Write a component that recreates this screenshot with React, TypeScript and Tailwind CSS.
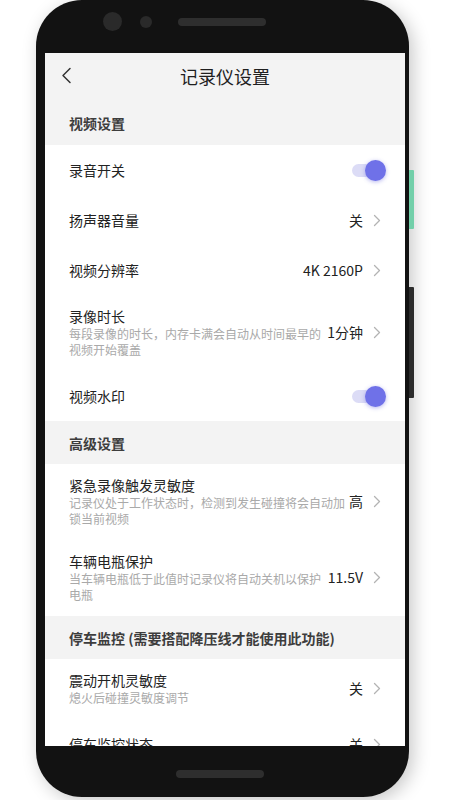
import React from 'react';

type Row = {
  title: string;
  desc?: string;
  value?: string;
  toggle?: boolean;
};

type Section = {
  name: string;
  rows: Row[];
};

const sections: Section[] = [
  {
    name: '视频设置',
    rows: [
      { title: '录音开关', toggle: true },
      { title: '扬声器音量', value: '关' },
      { title: '视频分辨率', value: '4K 2160P' },
      { title: '录像时长', desc: '每段录像的时长，内存卡满会自动从时间最早的视频开始覆盖', value: '1分钟' },
      { title: '视频水印', toggle: true },
    ],
  },
  {
    name: '高级设置',
    rows: [
      { title: '紧急录像触发灵敏度', desc: '记录仪处于工作状态时，检测到发生碰撞将会自动加锁当前视频', value: '高' },
      { title: '车辆电瓶保护', desc: '当车辆电瓶低于此值时记录仪将自动关机以保护电瓶', value: '11.5V' },
    ],
  },
  {
    name: '停车监控 (需要搭配降压线才能使用此功能)',
    rows: [
      { title: '震动开机灵敏度', desc: '熄火后碰撞灵敏度调节', value: '关' },
      { title: '停车监控状态', value: '关' },
    ],
  },
];

const Chevron = () => (
  <svg width="8" height="13" viewBox="0 0 8 13" fill="none">
    <path d="M1.5 1.5L6.5 6.5L1.5 11.5" stroke="#b3b3b3" strokeWidth="1.3" strokeLinecap="round" strokeLinejoin="round" />
  </svg>
);

const Toggle = () => (
  <div className="relative w-[34px] h-[22px] flex items-center -mr-[5px]">
    <div className="h-[13px] w-[30px] rounded-full bg-[#dcdcf6]" />
    <div className="absolute right-0 top-[0.5px] w-[21px] h-[21px] rounded-full bg-[#6f71e8] shadow-[0_1px_4px_rgba(90,92,220,0.45)]" />
  </div>
);

const SettingRow: React.FC<{ row: Row }> = ({ row }) => (
  <div className={`flex items-center px-6 min-h-[50px] bg-white ${row.desc ? 'pt-[11px] pb-[13px]' : 'py-3'}`}>
    <div className="flex-1 min-w-0">
      <div className="text-[14px] leading-[20px] text-[#222]">{row.title}</div>
      {row.desc && <div className="text-[12px] leading-[16px] text-[#a9a9a9]">{row.desc}</div>}
    </div>
    {row.toggle ? (
      <Toggle />
    ) : (
      <div className="flex items-center gap-[10px] ml-1 shrink-0">
        <span className="text-[14px] leading-[20px] text-[#222]">{row.value}</span>
        <Chevron />
      </div>
    )}
  </div>
);

export default function App() {
  return (
    <div className="w-[450px] h-[800px] bg-white overflow-hidden pl-[36px] font-['Noto_Sans_CJK_SC','Noto_Sans',sans-serif]">
      <div className="relative w-[373px] h-[797px] rounded-[46px] bg-[#121212] shadow-[4px_4px_18px_rgba(0,0,0,0.22)] flex flex-col">
        {/* side buttons */}
        <div className="absolute left-[373px] top-[170px] w-[5px] h-[59px] bg-[#72cfa9] rounded-r-[1px]" />
        <div className="absolute left-[373px] top-[287px] w-[5px] h-[111px] bg-[#2b2b2b] rounded-r-[1px]" />

        {/* top bezel */}
        <div className="h-[53px] shrink-0 flex items-center pl-[67px] pb-[10px]">
          <div className="w-[19px] h-[19px] rounded-full bg-[#2a2a2a]" />
          <div className="w-[12px] h-[12px] rounded-full bg-[#2a2a2a] ml-[18px]" />
          <div className="w-[88px] h-[8px] rounded-full bg-[#2e2e2e] ml-[26px]" />
        </div>

        {/* screen */}
        <div className="ml-[9px] w-[360px] h-[693px] shrink-0 bg-[#f3f3f3] overflow-hidden">
          <div className="relative h-[45px] flex items-center justify-center">
            <svg className="absolute left-[16px] top-[14px]" width="12" height="18" viewBox="0 0 12 18" fill="none">
              <path d="M9 1.5L2 8.5L9 15.5" stroke="#333" strokeWidth="1.5" strokeLinecap="round" strokeLinejoin="round" />
            </svg>
            <span className="text-[18px] leading-[24px] text-[#1f1f1f]">记录仪设置</span>
          </div>

          {sections.map((s, i) => (
            <div key={s.name}>
              <div className={`px-6 flex items-center ${i === 0 ? 'h-[47px] pt-[2px]' : 'h-[43px]'}`}>
                <span className="text-[14px] leading-[20px] font-bold text-[#3d3d3d]">{s.name}</span>
              </div>
              {s.rows.map((r) => (
                <SettingRow key={r.title} row={r} />
              ))}
            </div>
          ))}
        </div>

        {/* bottom bezel */}
        <div className="flex-1 flex items-center justify-center pr-[6px] pt-[5px]">
          <div className="w-[88px] h-[8px] rounded-full bg-[#2e2e2e]" />
        </div>
      </div>
    </div>
  );
}
